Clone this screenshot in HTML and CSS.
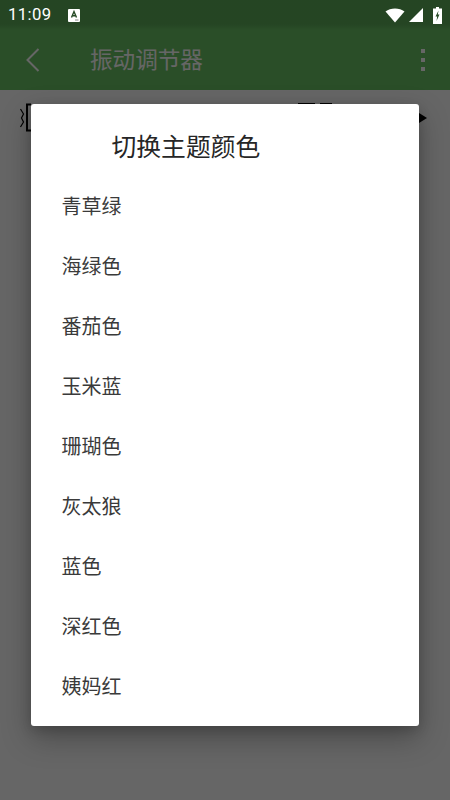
FILE: index.html
```html
<!DOCTYPE html>
<html lang="zh">
<head>
<meta charset="utf-8">
<title>振动调节器</title>
<link rel="stylesheet" href="styles.css">
</head>
<body>
<div class="app">
  <header class="toolbar">
    <svg class="back" width="16" height="26" viewBox="0 0 16 26"><path d="M14.500 2 L3.500 13 L14.500 24" fill="none" stroke="#fff" stroke-width="2"/></svg>
    <h1 class="page-title">振动调节器</h1>
    <div class="more"><i></i><i></i><i></i></div>
  </header>
  <main class="content">
    <svg class="mark-left" width="14" height="29" viewBox="0 0 14 29"><path d="M2.500 6 L5.500 11 L3.500 15 L5.500 19 L2.500 24" fill="none" stroke="#000" stroke-width="1.200"/><path d="M13 1.500 H9 V27.500 H13" fill="none" stroke="#000" stroke-width="2"/></svg>
    <div class="mark-top"><i></i><i></i></div>
    <svg class="mark-right" width="8" height="10" viewBox="0 0 8 10"><path d="M0 0 L8 5 L0 10 Z" fill="#000"/></svg>
  </main>
</div>
<div class="scrim"></div>
<div class="status">
  <span class="time">11:09</span>
  <svg class="a-icon" width="12" height="13" viewBox="0 0 12 13"><rect width="12" height="13" rx="1" fill="#fff"/><path d="M3.500 8.500 L6 2.500 L8.500 8.500 M4.400 6.700 H7.600" fill="none" stroke="#264a25" stroke-width="1.400"/><path d="M7 11 H10.500" stroke="#888" stroke-width="1"/></svg>
  <span class="spacer"></span>
  <svg width="20" height="15" viewBox="0 0 20 15"><path d="M0.500 3.500 C5.500 -0.500 14.500 -0.500 19.500 3.500 L10 14.500 Z" fill="#fff"/></svg>
  <svg class="signal" width="14" height="14" viewBox="0 0 14 14"><path d="M14 0 V14 H0 Z" fill="#fff"/></svg>
  <svg class="battery" width="9" height="17" viewBox="0 0 9 17"><path d="M3 0 H6 V1.500 H9 V17 H0 V1.500 H3 Z" fill="#fff"/><path d="M5.500 3.500 L2.500 9.500 H4.200 L3.500 14 L6.500 7.500 H4.800 Z" fill="#264a25"/></svg>
</div>
<section class="dialog">
  <h2 class="dialog-title">切换主题颜色</h2>
  <ul class="options">
    <li>青草绿</li>
    <li>海绿色</li>
    <li>番茄色</li>
    <li>玉米蓝</li>
    <li>珊瑚色</li>
    <li>灰太狼</li>
    <li>蓝色</li>
    <li>深红色</li>
    <li>姨妈红</li>
  </ul>
</section>
</body>
</html>
```
FILE: styles.css
```css
* { box-sizing: border-box; }
html, body { margin: 0; height: 100%; overflow: hidden; }
body {
  width: 450px;
  height: 800px;
  background: #fff;
  font-family: Roboto, "Noto Sans CJK SC", sans-serif;
  position: relative;
}
.app { display: flex; flex-direction: column; height: 800px; }
.toolbar {
  height: 90px;
  padding: 30px 25px 0 24px;
  background: #69c364;
  color: #fff;
  display: flex;
  align-items: center;
  box-shadow: 0 1px 3px rgba(0, 0, 0, .25);
  position: relative;
}
.back { flex: none; }
.page-title {
  margin: 2px 0 0 50px;
  flex: 1;
  font-size: 22.600px;
  font-weight: 400;
  line-height: 30px;
}
.more { display: flex; flex-direction: column; gap: 4.500px; }
.more i { display: block; width: 4.500px; height: 4.500px; background: #fff; }
.content {
  flex: 1;
  background: #fff;
  position: relative;
}
.mark-left { position: absolute; left: 18px; top: 13px; }
.mark-top { position: absolute; left: 298px; top: 13px; display: flex; gap: 5px; }
.mark-top i { display: block; height: 3px; width: 17px; background: #000; }
.mark-top i + i { width: 12px; }
.mark-right { position: absolute; left: 419px; top: 23px; }
.scrim { position: absolute; inset: 0; background: rgba(0, 0, 0, .6); }
.status {
  position: absolute;
  left: 0; top: 0; right: 0;
  height: 30px;
  padding: 0 8px 0 8px;
  display: flex;
  align-items: center;
  color: #fff;
  background: linear-gradient(rgba(0, 0, 0, .12) 80%, rgba(0, 0, 0, 0));
}
.time { font-size: 16.700px; line-height: 30px; letter-spacing: .4px; }
.a-icon { margin: 0 0 0 16px; }
.spacer { flex: 1; }
.signal { margin-left: 4px; }
.battery { margin-left: 10px; }
.dialog {
  position: absolute;
  left: 31px;
  top: 104px;
  width: 388px;
  height: 622px;
  background: #fff;
  border-radius: 3px;
  box-shadow: 0 12px 30px rgba(0, 0, 0, .28), 0 4px 12px rgba(0, 0, 0, .16);
}
.dialog-title {
  margin: 0;
  padding: 26px 0 0 80.500px;
  height: 73px;
  font-size: 24.800px;
  font-weight: 400;
  line-height: 36px;
  color: #262626;
}
.options { list-style: none; margin: 0; padding: 0 0 0 31px; }
.options li {
  height: 60px;
  line-height: 60px;
  font-size: 20px;
  color: #3a3a3a;
  text-indent: -0.500px;
}
```
